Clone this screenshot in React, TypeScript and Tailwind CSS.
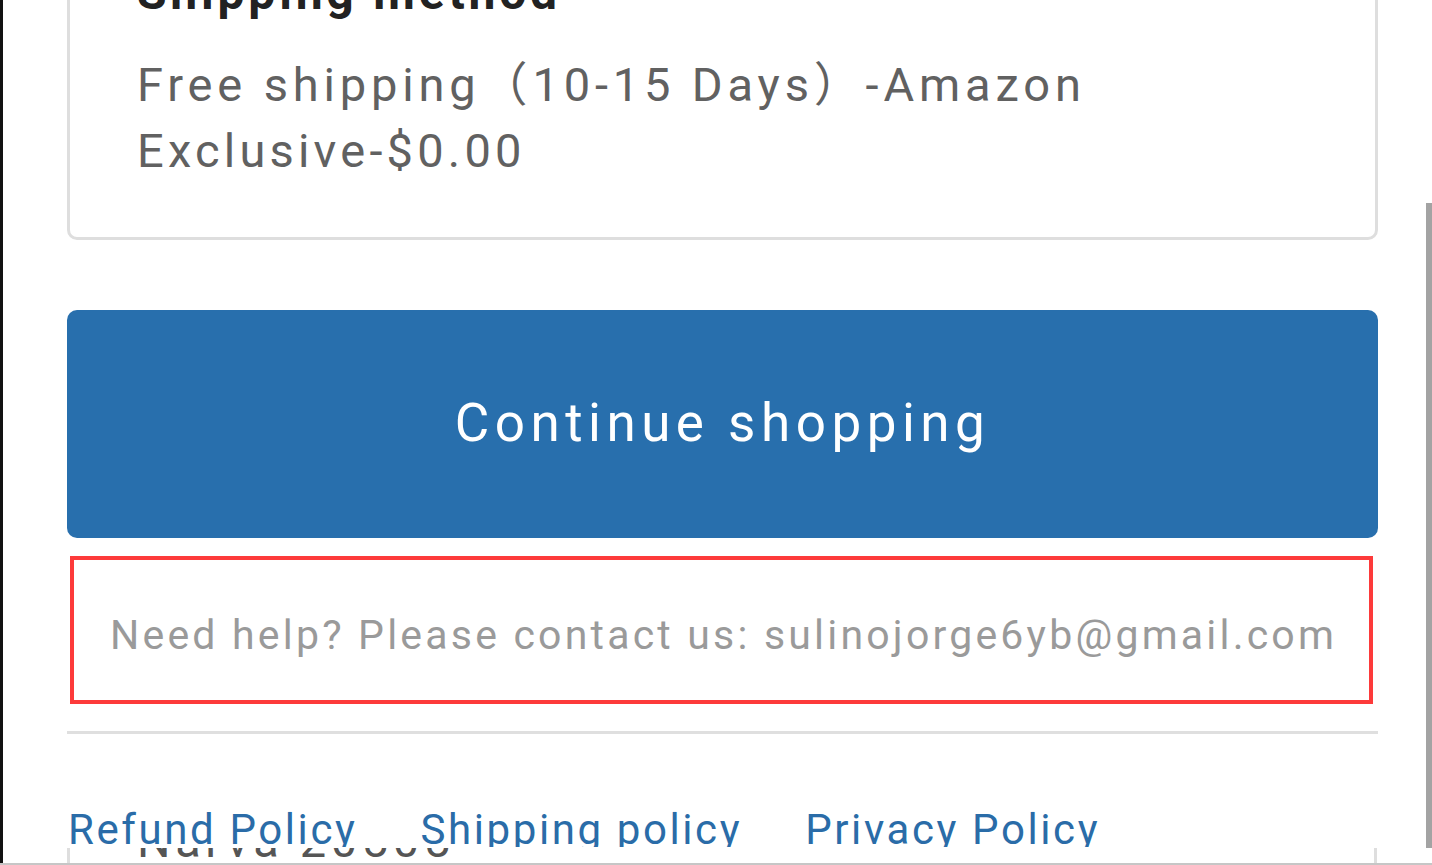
import React from 'react';

const font = { fontFamily: '"Roboto", "Noto Sans CJK SC", sans-serif' };

export default function App() {
  return (
    <div className="w-[1432px] h-[865px] overflow-hidden flex flex-col bg-white" style={font}>
      <div className="flex flex-1 min-h-0">
        {/* left edge */}
        <div className="w-[3px] bg-[#111]" />

        {/* page */}
        <main className="flex-1 min-w-0 overflow-hidden flex flex-col pl-[64px] pr-[48px]">
          {/* Shipping method card */}
          <section className="mt-[-36px] border-[3px] border-[#dedede] rounded-[10px] pl-[67px] pr-[40px] pb-[53px]">
            <h2 className="text-[48px] leading-[52px] font-bold text-[#222] tracking-[3.8px] whitespace-nowrap">Shipping method</h2>
            <p className="mt-[33px] text-[47px] leading-[66px] text-[#616161]">
              <span className="block whitespace-nowrap tracking-[4.85px]">Free shipping（10-15 Days）-Amazon</span>
              <span className="block whitespace-nowrap tracking-[4.2px]">Exclusive-$0.00</span>
            </p>
          </section>

          {/* Continue button */}
          <button className="mt-[70px] h-[228px] w-full shrink-0 rounded-[10px] bg-[#286fad] text-white text-[53px] tracking-[5.5px] flex items-center justify-center">
            Continue shopping
          </button>

          {/* Help box */}
          <div className="mt-[18px] ml-[3px] mr-[5px] h-[148px] shrink-0 border-4 border-[#fd3a3a] flex items-center pl-[36px] pt-[11px]">
            <p className="text-[41px] text-[#9a9a9a] tracking-[3.2px] whitespace-nowrap">
              Need help? Please contact us: sulinojorge6yb@gmail.com
            </p>
          </div>

          {/* Divider */}
          <div className="mt-[27px] h-[3px] shrink-0 bg-[#dfdfdf]" />

          {/* Footer links */}
          <nav className="h-[113px] shrink-0 overflow-hidden pt-[70px] flex gap-[63px] pl-[1px]">
            <a className="text-[42px] leading-[52px] text-[#2a6ca8] tracking-[2.6px] whitespace-nowrap">Refund Policy</a>
            <a className="text-[42px] leading-[52px] text-[#2a6ca8] tracking-[2.6px] whitespace-nowrap">Shipping policy</a>
            <a className="text-[42px] leading-[52px] text-[#2a6ca8] tracking-[2.6px] whitespace-nowrap">Privacy Policy</a>
          </nav>

          {/* Address card (scrolled under) */}
          <div className="mt-[1px] h-[15px] shrink-0 overflow-hidden border-x-[3px] border-[#dedede] mr-[1px] pl-[67px]">
            <p className="mt-[-34px] text-[47px] leading-[54px] text-[#555] tracking-[4.6px] whitespace-nowrap">Narva 20505</p>
          </div>
        </main>

        {/* scrollbar */}
        <div className="w-[6px] flex flex-col">
          <div className="h-[203px]" />
          <div className="h-[645px] bg-[#a3a3a3]" />
        </div>
      </div>
      <div className="h-[2px] bg-[#c6c6c6]" />
    </div>
  );
}
